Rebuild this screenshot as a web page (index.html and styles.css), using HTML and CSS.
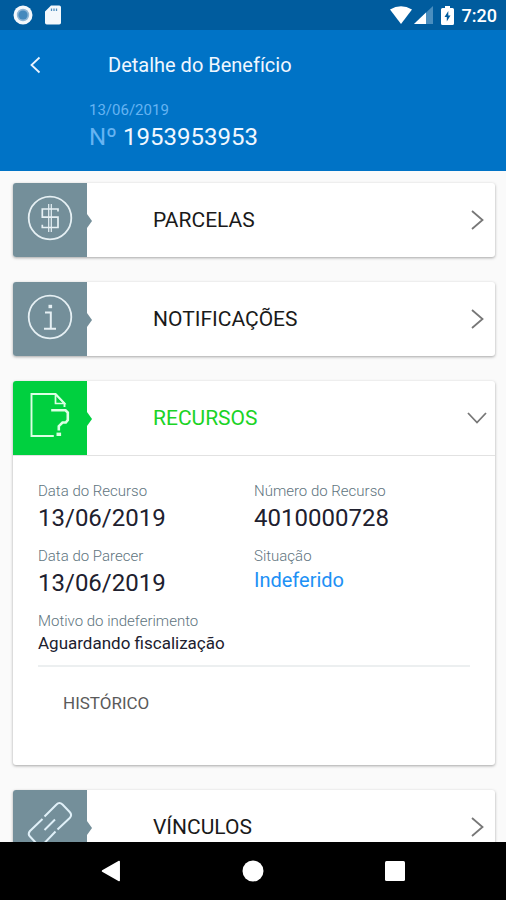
FILE: index.html
```html
<!DOCTYPE html>
<html lang="pt-BR">
<head>
<meta charset="utf-8">
<meta name="viewport" content="width=device-width, initial-scale=1">
<title>Detalhe do Benefício</title>
<link rel="stylesheet" href="styles.css">
</head>
<body>
<div class="app">
  <div class="status">
    <svg width="20" height="20" viewBox="0 0 20 20" aria-hidden="true"><circle cx="10" cy="10" r="9.5" fill="#f4f8fc"/><circle cx="10" cy="10" r="6.2" fill="#8fb6d6"/><circle cx="10" cy="10" r="4.6" fill="#4589bd"/></svg>
    <svg width="16" height="20" viewBox="0 0 16 20" aria-hidden="true"><path d="M6 .5h8.2a1.8 1.8 0 0 1 1.8 1.800v15.400a1.800 1.800 0 0 1-1.800 1.800H1.800A1.800 1.800 0 0 1 0 17.700V6.500z" fill="#f4f8fc"/><path d="M6.500 3.500v2.500M9 3.500v2.500M11.500 3.500v2.500" stroke="#4f8dbd" stroke-width="1.300"/></svg>
    <span class="status-right">
      <svg width="22" height="18" viewBox="0 0 22 18" aria-hidden="true"><path d="M0 3.500Q11-3 22 3.500L11 18z" fill="#fff"/></svg>
      <svg width="19" height="18" viewBox="0 0 19 18" aria-hidden="true"><path d="M19 0v18H0z" fill="#4a8ebf"/><path d="M12 6.600V18H0z" fill="#fff"/></svg>
      <svg class="battery" width="13" height="19" viewBox="0 0 13 19" aria-hidden="true"><path d="M4 0h5v2h2.500A1.500 1.500 0 0 1 13 3.500v14a1.500 1.500 0 0 1-1.500 1.500h-10A1.500 1.500 0 0 1 0 17.500v-14A1.500 1.500 0 0 1 1.500 2H4z" fill="#fff"/><path d="M7.300 5 3.500 11h2.300v4.500L9.500 9.500H7.300z" fill="#005c9e"/></svg>
      <span>7:20</span>
    </span>
  </div>

  <header class="header">
    <div class="toolbar">
      <button class="back" type="button" aria-label="Voltar"><svg width="11" height="18" viewBox="0 0 11 18"><path d="M9.500 1.500 1.500 9l8 7.500" fill="none" stroke="#eaf4ff" stroke-width="1.800"/></svg></button>
      <h1>Detalhe do Benefício</h1>
    </div>
    <div class="summary">
      <p class="date">13/06/2019</p>
      <p class="number"><span>Nº</span> 1953953953</p>
    </div>
  </header>

  <main class="content">
    <section class="card">
      <button class="card-head" type="button" aria-expanded="false">
        <span class="tile"><svg width="46" height="46" viewBox="0 0 46 46" fill="none" stroke="#e6f0f4"><circle cx="23" cy="23" r="21.300" stroke-width="1.800"/><path d="M31 16.500V14H15.300v8.200H31v10.300H15.300v-2.800" stroke-width="1.700"/><path d="M21.700 9v28M24.300 9v28" stroke-width="1.200"/></svg></span>
        <span class="card-title">PARCELAS</span>
        <svg class="chevron" width="20" height="20" viewBox="0 0 20 20"><path d="m5 1 10.500 9L5 19"/></svg>
      </button>
    </section>

    <section class="card">
      <button class="card-head" type="button" aria-expanded="false">
        <span class="tile"><svg width="46" height="46" viewBox="0 0 46 46" fill="none" stroke="#e6f0f4"><circle cx="23" cy="23" r="21.300" stroke-width="1.800"/><path d="M18 18.500h5.800v16.200M17 34.800h12" stroke-width="2"/><path d="M21.500 12.500h3.600" stroke-width="3.400"/></svg></span>
        <span class="card-title">NOTIFICAÇÕES</span>
        <svg class="chevron" width="20" height="20" viewBox="0 0 20 20"><path d="m5 1 10.500 9L5 19"/></svg>
      </button>
    </section>

    <section class="card open">
      <button class="card-head" type="button" aria-expanded="true">
        <span class="tile"><svg width="46" height="46" viewBox="0 0 46 46" fill="none" stroke="#dcffe4"><path d="M37.500 14V10.500L28.500 1H4.500v42h22.300" stroke-width="1.900"/><path d="M28.500 1v9.500h9z" stroke-width="1.700"/><path d="M24.200 17.300h14.300l2.300 2.300V27l-2 2.500h-3.300l-3.700 3.700v4.300" stroke-width="2.600"/><path d="M29.500 41.300h4.600" stroke-width="3.400"/></svg></span>
        <span class="card-title">RECURSOS</span>
        <svg class="chevron" width="20" height="20" viewBox="0 0 20 20"><path d="m1 5 9 9.500L19 5"/></svg>
      </button>
      <div class="card-body">
        <dl class="fields">
          <div><dt>Data do Recurso</dt><dd>13/06/2019</dd></div>
          <div><dt>Número do Recurso</dt><dd>4010000728</dd></div>
          <div><dt>Data do Parecer</dt><dd>13/06/2019</dd></div>
          <div><dt>Situação</dt><dd class="state">Indeferido</dd></div>
          <div class="wide"><dt>Motivo do indeferimento</dt><dd class="reason">Aguardando fiscalização</dd></div>
        </dl>
        <button class="history" type="button">HISTÓRICO</button>
      </div>
    </section>

    <section class="card">
      <button class="card-head" type="button" aria-expanded="false">
        <span class="tile"><svg width="46" height="46" viewBox="0 0 46 46" fill="none" stroke="#e0f0f8" stroke-width="2"><path d="M17.500 14.500 29.500 2.500Q32.300-.5 35.500 2.500L42.700 10Q45.500 13 42.700 16L30.500 27.500"/><path d="M15.500 17 3 29Q.5 32 3 34.500L9.500 41.500Q13.500 45 17.500 41L28.500 29.500"/><path d="m17.500 28 10.500-10.500"/></svg></span>
        <span class="card-title">VÍNCULOS</span>
        <svg class="chevron" width="20" height="20" viewBox="0 0 20 20"><path d="m5 1 10.500 9L5 19"/></svg>
      </button>
    </section>
  </main>

  <nav class="navbar" aria-label="Sistema">
    <button type="button" aria-label="Voltar ao anterior"><svg width="20" height="22" viewBox="0 0 20 22"><path d="M18.200 1.500v19L1.500 11z" fill="#fff" stroke="#fff" stroke-width="1.500" stroke-linejoin="round"/></svg></button>
    <button type="button" aria-label="Início"><svg width="22" height="22" viewBox="0 0 22 22"><circle cx="11" cy="11" r="10.500" fill="#fff"/></svg></button>
    <button type="button" aria-label="Recentes"><svg width="20" height="20" viewBox="0 0 20 20"><rect width="20" height="20" rx="1.500" fill="#fff"/></svg></button>
  </nav>
</div>
</body>
</html>
```
FILE: styles.css
```css
* {
  box-sizing: border-box;
}

body,
h1,
p,
dl,
dd {
  margin: 0;
}

body {
  font-family: Roboto, "Liberation Sans", sans-serif;
  background: #fafafa;
}

button {
  margin: 0;
  padding: 0;
  border: 0;
  background: none;
  font: inherit;
  text-align: left;
  cursor: pointer;
}

svg {
  display: block;
  flex: none;
}

.app {
  display: flex;
  flex-direction: column;
  height: 100vh;
}

.status {
  display: flex;
  align-items: center;
  gap: 12px;
  flex: none;
  height: 30px;
  padding: 0 9px 0 13px;
  background: #005c9e;
  color: #fff;
  font-size: 18px;
  font-weight: 500;
}

.status-right {
  display: flex;
  align-items: center;
  gap: 2px;
  margin-left: auto;
}

.battery {
  margin: 0 6px;
}

.header {
  flex: none;
  padding-bottom: 18px;
  background: #0073c6;
  color: #f0f7ff;
}

.toolbar {
  display: flex;
  align-items: center;
  height: 70px;
  padding-left: 30px;
}

.back {
  width: 78px;
}

h1 {
  font-size: 20px;
  font-weight: 400;
}

.summary {
  padding-left: 89px;
}

.date {
  color: #66b3f2;
  font-size: 15px;
  line-height: 20px;
}

.number {
  font-size: 24px;
  line-height: 34px;
}

.number span {
  color: #66b3f2;
}

.header {
  padding-bottom: 17px;
}

.content {
  display: flex;
  flex: 1;
  flex-direction: column;
  gap: 25px;
  min-height: 0;
  padding: 12px 11px 0 13px;
  overflow: hidden;
}

.card {
  flex: none;
  border-radius: 3px;
  background: #fff;
  box-shadow: 0 1px 3px rgba(0, 0, 0, 0.34);
}

.card-head {
  display: flex;
  align-items: center;
  width: 100%;
  height: 74px;
  padding-right: 8px;
  color: #1a1a1a;
  font-size: 21px;
}

.tile {
  position: relative;
  display: flex;
  justify-content: center;
  flex: none;
  width: 74px;
  height: 74px;
  padding-top: 12px;
  border-radius: 3px 0 0 3px;
  background: #748f9a;
}

.tile::after {
  content: "";
  position: absolute;
  top: 31px;
  left: 100%;
  border: solid transparent;
  border-width: 7px 0 7px 5px;
  border-left-color: #748f9a;
}

.card-title {
  flex: 1;
  padding-left: 66px;
}

.chevron {
  fill: none;
  stroke: #777;
  stroke-width: 1.8;
}

.open .tile {
  border-radius: 3px 0 0 0;
  background: #00d03f;
}

.open .tile::after {
  border-left-color: #00d03f;
}

.open .card-title {
  color: #1bd326;
}

.card-body {
  padding: 26px 25px 46px;
  border-top: 1px solid #e2e2e2;
}

.fields {
  display: grid;
  grid-template-columns: 1fr 1fr;
  row-gap: 11px;
  padding-bottom: 9px;
  border-bottom: 2px solid #eceff0;
}

.wide {
  grid-column: 1 / -1;
}

dt {
  color: #60747e;
  font-size: 15px;
  font-weight: 300;
  line-height: 18px;
}

dd {
  color: #20202e;
  font-size: 24px;
  line-height: 36px;
}

.state {
  color: #2090f5;
  font-size: 20px;
  line-height: 30px;
}

.reason {
  font-size: 17px;
  line-height: 26px;
}

.history {
  display: block;
  margin: 20px 0 0 25px;
  color: #5a5a5a;
  font-size: 17px;
  line-height: 32px;
}

.navbar {
  display: grid;
  grid-template-columns: repeat(3, 1fr);
  flex: none;
  height: 58px;
  padding: 0 40px;
  background: #000;
}

.navbar button {
  display: flex;
  align-items: center;
  justify-content: center;
}
```
